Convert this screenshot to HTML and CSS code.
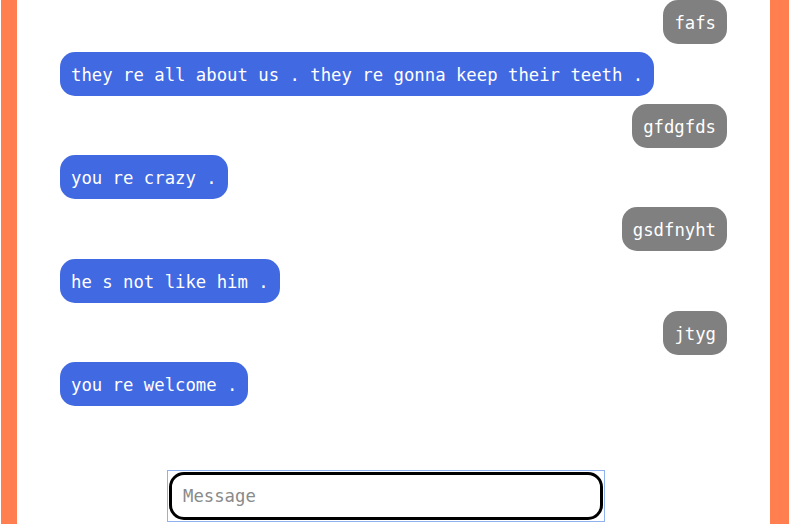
FILE: index.html
```html
<!DOCTYPE html>
<html>
<head>
<meta charset="utf-8">
<link rel="stylesheet" href="styles.css">
</head>
<body>
<div class="frame">
  <div class="chat">
    <div class="msg me">fafs</div>
    <div class="msg bot">they re all about us . they re gonna keep their teeth .</div>
    <div class="msg me">gfdgfds</div>
    <div class="msg bot">you re crazy .</div>
    <div class="msg me">gsdfnyht</div>
    <div class="msg bot">he s not like him .</div>
    <div class="msg me">jtyg</div>
    <div class="msg bot">you re welcome .</div>
  </div>
  <div class="composer">
    <div class="focus"><input class="input" type="text" placeholder="Message"></div>
  </div>
</div>
</body>
</html>
```
FILE: styles.css
```css
html, body {
  margin: 0;
  padding: 0;
  background: #ffffff;
  height: 524px;
  overflow: hidden;
}
.frame {
  margin-left: 1px;
  width: 753px;
  height: 524px;
  border-left: 16px solid #ff7f50;
  border-right: 19px solid #ff7f50;
  background: #fff;
  display: flex;
  flex-direction: column;
}
.chat {
  display: flex;
  flex-direction: column;
  gap: 7.75px;
  padding: 0 43px;
}
.msg {
  font-family: "DejaVu Sans Mono", monospace;
  font-size: 17.3px;
  line-height: 22px;
  padding: 12px 11px 10px;
  border-radius: 15px;
  color: #fff;
  white-space: pre;
}
.me {
  align-self: flex-end;
  background: #808080;
}
.bot {
  align-self: flex-start;
  background: #4169e1;
}
.composer {
  display: flex;
  padding-left: 150px;
  margin-top: 64px;
}
.focus {
  border: 1px solid #8fb1f0;
  padding: 1px;
  width: 434px;
}
.input {
  display: block;
  box-sizing: border-box;
  width: 434px;
  height: 48px;
  border: 3px solid #000;
  border-radius: 15px;
  padding: 0 11px;
  font-family: "DejaVu Sans Mono", monospace;
  font-size: 17.3px;
  color: #000;
  outline: none;
  background: #fff;
}
.input::placeholder {
  color: #8a8a8a;
}
```
